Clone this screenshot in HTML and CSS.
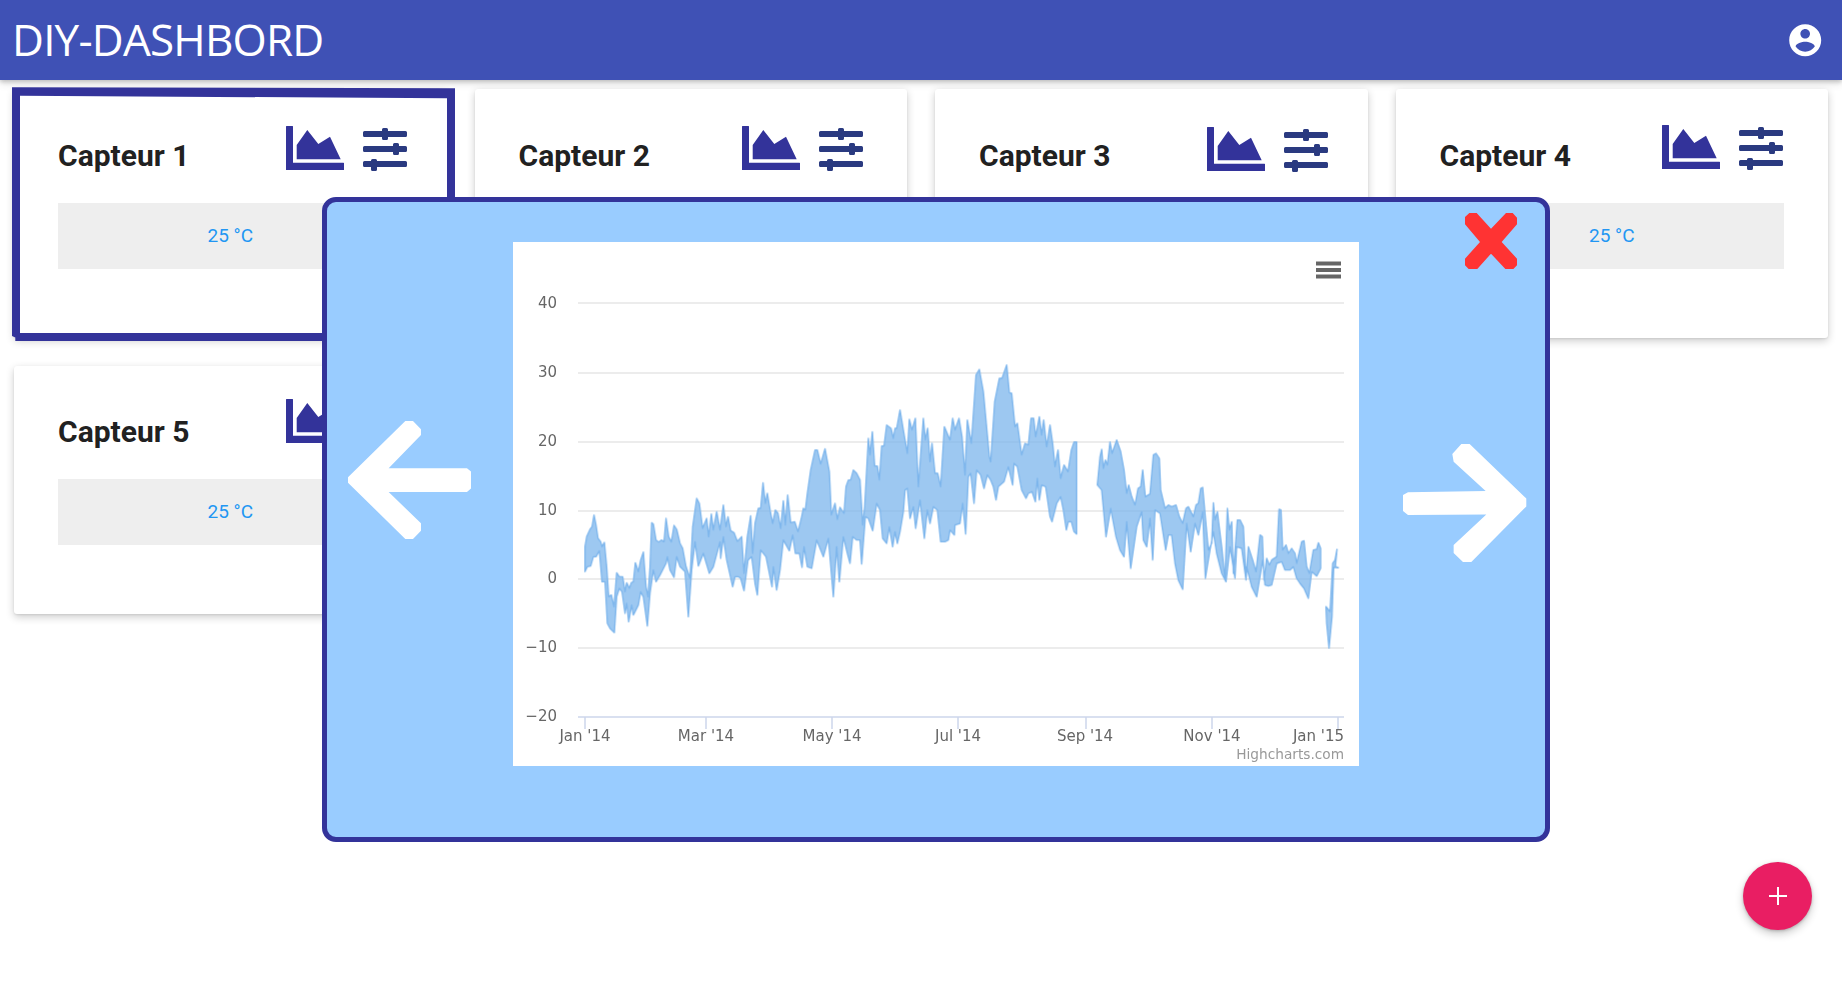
FILE: index.html
```html
<!DOCTYPE html>
<html lang="fr">
<head>
<meta charset="utf-8">
<title>DIY-DASHBORD</title>
<link rel="stylesheet" href="styles.css">
</head>
<body>
<header class="topbar">
  <h1 class="brand">DIY-DASHBORD</h1>
  <svg class="avatar" viewBox="0 0 24 24"><path d="M12 2C6.48 2 2 6.48 2 12s4.48 10 10 10 10-4.48 10-10S17.52 2 12 2zm0 3c1.66 0 3 1.34 3 3s-1.34 3-3 3-3-1.34-3-3 1.34-3 3-3zm0 14.2c-2.5 0-4.71-1.28-6-3.22.03-1.99 4-3.08 6-3.08 1.99 0 5.97 1.09 6 3.08-1.29 1.94-3.5 3.22-6 3.22z"/></svg>
</header>

<main class="grid">
  <section class="card card-1">
    <svg class="frame" viewBox="12 87 443 254.5"><path fill-rule="evenodd" d="M12 87.3 455 88.3V341H15.3L15.3 337.5 12 336ZM20 95.7V333H447V98.3Z"/></svg>
    <div class="head">
      <h2 class="name">Capteur 1</h2>
      <div class="tools">
        <svg class="ico-chart" viewBox="0 0 58 44"><use href="#chart"/></svg>
        <svg class="ico-sliders" viewBox="0 0 44 43"><use href="#sliders"/></svg>
      </div>
    </div>
    <div class="value">25 °C</div>
  </section>
  <section class="card card-2">
    <div class="head">
      <h2 class="name">Capteur 2</h2>
      <div class="tools">
        <svg class="ico-chart" viewBox="0 0 58 44"><use href="#chart"/></svg>
        <svg class="ico-sliders" viewBox="0 0 44 43"><use href="#sliders"/></svg>
      </div>
    </div>
    <div class="value">25 °C</div>
  </section>
  <section class="card card-3">
    <div class="head">
      <h2 class="name">Capteur 3</h2>
      <div class="tools">
        <svg class="ico-chart" viewBox="0 0 58 44"><use href="#chart"/></svg>
        <svg class="ico-sliders" viewBox="0 0 44 43"><use href="#sliders"/></svg>
      </div>
    </div>
    <div class="value">25 °C</div>
  </section>
  <section class="card card-4">
    <div class="head">
      <h2 class="name">Capteur 4</h2>
      <div class="tools">
        <svg class="ico-chart" viewBox="0 0 58 44"><use href="#chart"/></svg>
        <svg class="ico-sliders" viewBox="0 0 44 43"><use href="#sliders"/></svg>
      </div>
    </div>
    <div class="value">25 °C</div>
  </section>
  <section class="card card-5">
    <div class="head">
      <h2 class="name">Capteur 5</h2>
      <div class="tools">
        <svg class="ico-chart" viewBox="0 0 58 44"><use href="#chart"/></svg>
        <svg class="ico-sliders" viewBox="0 0 44 43"><use href="#sliders"/></svg>
      </div>
    </div>
    <div class="value">25 °C</div>
  </section>
</main>

<button class="fab" type="button"><svg class="fab-plus" viewBox="0 0 18 18"><path d="M8 0h2v8h8v2h-8v8H8v-8H0V8h8z"/></svg></button>

<div class="modal">
  <svg class="close" viewBox="255 638 156 170"><polygon points="255,650 268,638 290,638 333,685 378,638 398,638 411,652 411,672 365,725 411,775 411,795 398,808 378,808 333,760 290,808 268,808 255,795 255,775 300,725 255,672"/></svg>
  <svg class="arrow arrow-left" viewBox="1043 243 370 354"><polygon points="1043,412 1215,243 1238,243 1262,268 1262,285 1165,385 1400,385 1413,395 1413,445 1400,456 1165,456 1262,550 1262,572 1238,597 1215,597 1043,428"/></svg>
  <svg class="arrow arrow-right" viewBox="70 122 370 331" preserveAspectRatio="none"><polygon points="70,265 85,257 318,254 222,172 218,150 245,122 270,122 440,275 440,297 275,453 250,453 222,428 222,405 320,320 85,321 70,310"/></svg>

  <svg class="plot" viewBox="513 242 846 524">
    <g class="gridlines">
      <line x1="578" x2="1344" y1="303" y2="303"/>
      <line x1="578" x2="1344" y1="373" y2="373"/>
      <line x1="578" x2="1344" y1="442" y2="442"/>
      <line x1="578" x2="1344" y1="511" y2="511"/>
      <line x1="578" x2="1344" y1="579" y2="579"/>
      <line x1="578" x2="1344" y1="648" y2="648"/>
    </g>
    <g class="axis">
      <line x1="578" x2="1344" y1="717" y2="717"/>
      <line x1="585" x2="585" y1="717" y2="729"/>
      <line x1="706" x2="706" y1="717" y2="729"/>
      <line x1="832" x2="832" y1="717" y2="729"/>
      <line x1="958" x2="958" y1="717" y2="729"/>
      <line x1="1086" x2="1086" y1="717" y2="729"/>
      <line x1="1212" x2="1212" y1="717" y2="729"/>
      <line x1="1338" x2="1338" y1="717" y2="729"/>
    </g>
    <g class="series" transform="translate(510 340) scale(.33333)">
      <polygon points="225,620 230,590 240,568 246,560 252,525 258,555 264,595 272,605 276,620 283,607 290,680 296,770 304,765 312,800 320,698 328,710 338,710 345,755 350,728 358,745 364,728 370,725 376,668 385,695 392,660 400,636 408,740 414,770 420,680 425,548 430,552 438,600 446,606 454,600 462,605 468,535 476,590 484,606 492,556 500,568 510,610 518,625 528,680 540,715 548,560 560,475 568,490 578,565 590,535 596,590 604,522 610,570 620,515 630,570 640,495 648,560 654,530 662,572 672,578 682,604 695,590 702,700 712,590 722,527 728,640 735,550 745,505 752,505 759,428 766,490 772,460 782,520 788,550 796,510 804,520 812,565 820,482 826,555 833,465 842,548 854,545 864,575 875,530 880,505 886,510 892,460 902,390 915,330 922,330 932,372 945,326 958,395 964,525 975,490 982,538 990,502 1002,520 1008,440 1015,420 1022,420 1030,390 1040,400 1050,420 1058,555 1064,500 1075,295 1080,345 1087,275 1094,378 1102,378 1108,420 1115,318 1122,318 1130,255 1143,265 1150,295 1155,265 1160,265 1170,210 1180,270 1192,340 1198,238 1206,270 1216,235 1225,440 1240,235 1246,300 1253,265 1260,365 1266,310 1275,400 1283,400 1292,440 1303,260 1320,300 1328,235 1335,270 1347,235 1356,290 1365,405 1372,240 1384,310 1398,105 1408,88 1420,155 1438,350 1442,365 1454,185 1468,115 1476,115 1490,75 1498,158 1505,160 1515,260 1522,250 1535,345 1545,310 1555,315 1563,235 1571,235 1577,290 1588,230 1595,285 1601,240 1610,320 1620,255 1628,310 1635,380 1644,330 1652,415 1662,375 1674,395 1684,330 1692,306 1700,306 1700,582 1692,575 1684,545 1675,545 1669,570 1660,510 1652,470 1640,490 1626,545 1620,530 1607,440 1595,435 1588,480 1582,415 1576,485 1566,455 1555,460 1548,475 1535,450 1522,380 1512,370 1508,435 1495,380 1482,425 1465,440 1458,480 1450,440 1442,420 1432,405 1422,445 1412,405 1400,390 1392,490 1382,400 1375,410 1367,582 1358,490 1350,550 1335,555 1333,585 1320,570 1315,600 1305,605 1292,605 1282,510 1270,500 1260,550 1252,510 1243,595 1230,480 1217,565 1210,500 1200,535 1192,445 1185,450 1180,515 1170,575 1162,610 1155,575 1148,620 1138,560 1130,610 1118,595 1110,510 1100,490 1088,572 1075,535 1066,530 1055,672 1050,600 1040,600 1028,590 1020,670 1012,640 1000,590 988,725 980,620 970,770 955,595 940,650 920,600 905,685 892,680 882,620 876,682 868,640 856,640 848,585 838,632 820,600 810,690 800,750 790,680 786,740 768,650 752,630 742,765 735,730 725,650 714,660 702,752 692,715 685,710 675,710 668,740 650,660 640,590 632,655 630,605 610,680 598,700 580,640 565,678 555,605 545,690 535,830 525,695 510,680 500,650 492,712 480,690 472,650 468,670 450,705 438,725 430,690 420,760 412,858 400,770 392,755 385,795 370,825 365,795 356,845 350,790 345,820 336,755 328,745 320,770 313,878 300,865 292,850 285,725 276,725 268,632 258,650 250,650 242,678 232,680 225,695"/>
      <polygon transform="translate(1170 0)" points="592,435 600,350 605,328 610,385 616,360 622,375 630,306 636,340 650,300 662,335 672,390 680,460 686,435 695,470 705,495 714,445 722,440 728,390 736,470 750,462 760,345 768,340 778,355 782,450 795,505 805,495 815,500 828,495 838,530 848,550 858,505 865,500 880,530 888,495 895,490 902,445 908,442 915,520 925,630 935,610 940,488 945,540 952,515 965,620 975,720 982,505 988,570 995,545 1000,700 1012,540 1020,540 1030,560 1038,720 1045,620 1058,660 1068,695 1080,585 1087,590 1092,720 1100,655 1108,675 1115,660 1130,650 1137,508 1143,510 1148,630 1158,615 1165,640 1175,625 1185,640 1190,670 1205,605 1212,602 1220,680 1228,700 1240,630 1250,628 1255,608 1262,625 1262,685 1250,708 1235,695 1225,775 1212,745 1200,730 1190,715 1180,680 1170,690 1155,690 1145,665 1130,670 1115,735 1105,738 1095,735 1088,660 1070,770 1055,740 1040,680 1038,720 1025,625 1010,620 1005,715 990,620 978,725 965,700 950,640 940,575 930,630 916,715 908,515 895,585 885,550 872,635 860,550 848,748 835,720 825,670 815,585 805,585 797,630 780,520 765,510 758,660 750,535 740,620 730,600 725,515 710,560 692,685 680,545 672,650 660,630 648,590 632,505 618,590 605,450"/>
      <polygon transform="translate(1170 0)" points="1278,800 1290,815 1298,670 1305,660 1311,628 1306,680 1315,683 1301,682 1296,830 1287,924 1280,850"/>
    </g>
    <g class="hamburger">
      <line x1="1316" x2="1341" y1="263.5" y2="263.5"/>
      <line x1="1316" x2="1341" y1="270" y2="270"/>
      <line x1="1316" x2="1341" y1="276.5" y2="276.5"/>
    </g>
    <g class="ylabels">
      <text x="557" y="308">40</text>
      <text x="557" y="377">30</text>
      <text x="557" y="446">20</text>
      <text x="557" y="515">10</text>
      <text x="557" y="583">0</text>
      <text x="557" y="652">−10</text>
      <text x="557" y="721">−20</text>
    </g>
    <g class="xlabels">
      <text x="585" y="741">Jan '14</text>
      <text x="706" y="741">Mar '14</text>
      <text x="832" y="741">May '14</text>
      <text x="958" y="741">Jul '14</text>
      <text x="1085" y="741">Sep '14</text>
      <text x="1212" y="741">Nov '14</text>
      <text class="xlabel-end" x="1344" y="741">Jan '15</text>
    </g>
    <text class="credit" x="1344" y="759">Highcharts.com</text>
  </svg>
</div>

<svg class="defs" width="0" height="0">
  <defs>
    <g id="chart">
      <path class="chart-shape" d="M0.5 0H6.5A.5 .5 0 0 1 7 .5V36.700H57.500A.5 .5 0 0 1 58 37.200V43.500A.5 .5 0 0 1 57.500 44H.5A.5 .5 0 0 1 0 43.500V.5A.5 .5 0 0 1 .5 0Z"/>
      <polygon class="chart-shape" points="10.700,33.300 10.700,19 21.300,4 32.300,18 44,10.700 54.700,33.300"/>
    </g>
    <g id="sliders">
      <path class="slider-shape" d="M1.500 3H19V1.500A1.500 1.500 0 0 1 20.500 0H23.500A1.500 1.500 0 0 1 25 1.500V3H42.500A1.500 1.500 0 0 1 44 4.500V7.500A1.500 1.500 0 0 1 42.500 9H25V10.500A1.500 1.500 0 0 1 23.500 12H20.500A1.500 1.500 0 0 1 19 10.500V9H1.500A1.500 1.500 0 0 1 0 7.500V4.500A1.500 1.500 0 0 1 1.500 3Z"/>
      <path class="slider-shape" d="M1.500 18H30V16.500A1.500 1.500 0 0 1 31.500 15H34.500A1.500 1.500 0 0 1 36 16.500V18H42.500A1.500 1.500 0 0 1 44 19.500V22.500A1.500 1.500 0 0 1 42.500 24H36V25.500A1.500 1.500 0 0 1 34.500 27H31.500A1.500 1.500 0 0 1 30 25.500V24H1.500A1.500 1.500 0 0 1 0 22.500V19.500A1.500 1.500 0 0 1 1.500 18Z"/>
      <path class="slider-shape" d="M1.500 33H8V32.500A1.500 1.500 0 0 1 9.500 31H12.500A1.500 1.500 0 0 1 14 32.500V33H42.500A1.500 1.500 0 0 1 44 34.500V37.500A1.500 1.500 0 0 1 42.500 39H14V41.500A1.500 1.500 0 0 1 12.500 43H9.500A1.500 1.500 0 0 1 8 41.500V39H1.500A1.500 1.500 0 0 1 0 37.500V34.500A1.500 1.500 0 0 1 1.500 33Z"/>
    </g>
  </defs>
</svg>
</body>
</html>
```

FILE: styles.css
```css
* { box-sizing: border-box; }

html, body {
  margin: 0;
  height: 100%;
}

body {
  position: relative;
  min-height: 988px;
  overflow: hidden;
  background: #fff;
  font-family: Roboto, "Liberation Sans", sans-serif;
}

.topbar {
  display: flex;
  align-items: center;
  justify-content: space-between;
  height: 80px;
  padding: 0 17.800px 0 12px;
  background: #3f51b5;
  box-shadow: 0 2px 4px rgba(0, 0, 0, .18), 0 4px 8px rgba(0, 0, 0, .1);
}

.brand {
  margin: -2px 0 0;
  font-family: "Open Sans", sans-serif;
  font-size: 44px;
  font-weight: 400;
  line-height: 80px;
  letter-spacing: -.8px;
  color: #fff;
}

.avatar {
  width: 38.400px;
  height: 38.400px;
  fill: #fff;
}

.grid {
  display: grid;
  grid-template-columns: repeat(4, 1fr);
  grid-auto-rows: 248.500px;
  gap: 28px;
  padding: 9px 14px 0;
}

.card {
  position: relative;
  padding: 37px 44px 0;
  background: #fff;
  border-radius: 3px;
  box-shadow: 0 1px 2px rgba(0, 0, 0, .08), 0 3px 9px rgba(0, 0, 0, .2);
}

.frame {
  position: absolute;
  left: -2px;
  top: -2px;
  width: 443px;
  height: 254.500px;
  fill: #33339a;
}

.head {
  display: flex;
  justify-content: space-between;
  align-items: flex-start;
  height: 77px;
}

.name {
  margin: 9.500px 0 0;
  font-size: 30px;
  font-weight: 700;
  line-height: 40px;
  color: #212121;
}

.tools {
  display: flex;
  align-items: flex-start;
  gap: 19px;
}

.card-1 .tools { margin-right: -4.500px; }
.card-3 .tools { margin-right: -4.500px; margin-top: 1px; }
.card-4 .tools { margin-right: 1px; margin-top: -1px; }
.card-5 .tools { margin-right: -4.500px; margin-top: -4px; }
.card-5 .head { height: 76.500px; }

.ico-chart {
  width: 58px;
  height: 44px;
}

.ico-sliders {
  width: 44px;
  height: 43px;
  margin-top: 2px;
}

.chart-shape { fill: #33339a; }
.slider-shape { fill: #2a3a80; }

.value {
  height: 66px;
  background: #eee;
  font-size: 19px;
  line-height: 66px;
  text-align: center;
  color: #2196f3;
}

.fab {
  position: absolute;
  left: 1743px;
  top: 862px;
  display: flex;
  align-items: center;
  justify-content: center;
  width: 69px;
  height: 68px;
  padding: 0;
  border: 0;
  border-radius: 50%;
  background: #e91e63;
  box-shadow: 0 1px 3px rgba(0, 0, 0, .2), 0 4px 8px rgba(0, 0, 0, .2);
}

.fab-plus {
  width: 18px;
  height: 18px;
  fill: #fff;
}

.modal {
  position: absolute;
  left: 322px;
  top: 197px;
  display: flex;
  justify-content: center;
  align-items: flex-start;
  width: 1228px;
  height: 645px;
  padding-top: 40px;
  background: #99ccff;
  border: 5px solid #33339a;
  border-radius: 14px;
}

.plot {
  display: block;
  flex: none;
  width: 846px;
  height: 524px;
  background: #fff;
}

.gridlines line {
  stroke: #e6e6e6;
  stroke-width: 1.500;
}

.axis line {
  stroke: #ccd6eb;
  stroke-width: 1.500;
}

.series {
  filter: blur(.4px);
}

.series polygon {
  fill: rgba(124, 181, 236, .75);
  stroke: #7cb5ec;
  stroke-width: 4;
  stroke-linejoin: round;
}

.hamburger line {
  stroke: #666;
  stroke-width: 4;
}

.ylabels text,
.xlabels text {
  font-family: "DejaVu Sans", sans-serif;
  font-size: 15px;
  fill: #666;
}

.ylabels text { text-anchor: end; }
.xlabels text { text-anchor: middle; }
.xlabels .xlabel-end { text-anchor: end; }

.credit {
  font-family: "DejaVu Sans", sans-serif;
  font-size: 13.700px;
  fill: #999;
  text-anchor: end;
}

.close {
  position: absolute;
  right: 28px;
  top: 10.700px;
  width: 52px;
  height: 56.700px;
  fill: #ff3333;
}

.arrow {
  position: absolute;
  width: 123.300px;
  fill: #fff;
}

.arrow-left {
  left: 21px;
  top: 219px;
  height: 118px;
}

.arrow-right {
  right: 18.400px;
  top: 242px;
  height: 118px;
}

.defs { position: absolute; }
```
